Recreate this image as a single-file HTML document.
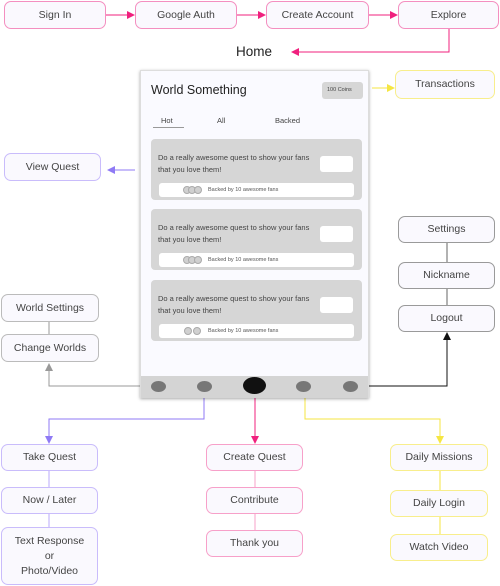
<!DOCTYPE html>
<html><head><meta charset="utf-8"><style>
*{margin:0;padding:0;box-sizing:border-box}
body{width:500px;height:586px;background:#fff;position:relative;overflow:hidden;font-family:"Liberation Sans",sans-serif;color:#444}
.b{position:absolute;background:#faf9fe;border:1px solid #999;border-radius:7px;font-size:10.5px;display:flex;align-items:center;justify-content:center;text-align:center;line-height:15px}
.pk{border-color:#f48fc0}.pu{border-color:#c9bcfb}.ye{border-color:#f8ee8c}.gr{border-color:#9a9a9a}
.a{position:absolute}
.card{position:absolute;left:151px;width:211px;height:61px;background:#d6d6d6;border-radius:4px}
.card .t{position:absolute;left:7px;top:13px;font-size:7.5px;line-height:11.5px;color:#444}
.card .w{position:absolute;left:169px;top:17px;width:33px;height:16px;background:#fff;border-radius:3px}
.card .bar{position:absolute;left:8px;top:44px;width:195px;height:14px;background:#fff;border-radius:3px;font-size:5.5px;color:#555;line-height:14px;padding-left:49px}
.card .tg{position:absolute;top:3px;width:8px;height:8px;border-radius:50%;background:#d0d0d0;border:1px solid #aaa}
.dot{position:absolute;width:15px;height:11px;border-radius:50%;background:#777}
</style></head><body>
<svg class="a" style="left:0;top:0" width="500" height="586">
<defs>
<marker id="mp" markerWidth="8" markerHeight="8" refX="7" refY="4" orient="auto" markerUnits="userSpaceOnUse"><path d="M0,0L8,4L0,8z" fill="#f0207e"/></marker>
<marker id="my" markerWidth="8" markerHeight="8" refX="7" refY="4" orient="auto" markerUnits="userSpaceOnUse"><path d="M0,0L8,4L0,8z" fill="#f5e642"/></marker>
<marker id="mu" markerWidth="8" markerHeight="8" refX="7" refY="4" orient="auto" markerUnits="userSpaceOnUse"><path d="M0,0L8,4L0,8z" fill="#8f7af5"/></marker>
<marker id="mk" markerWidth="8" markerHeight="8" refX="7" refY="4" orient="auto" markerUnits="userSpaceOnUse"><path d="M0,0L8,4L0,8z" fill="#111"/></marker>
<marker id="mg" markerWidth="8" markerHeight="8" refX="7" refY="4" orient="auto" markerUnits="userSpaceOnUse"><path d="M0,0L8,4L0,8z" fill="#999"/></marker>
</defs>
<g fill="none" stroke-width="1">
<path d="M106,15H134" stroke="#f0207e" marker-end="url(#mp)"/>
<path d="M237,15H265" stroke="#f0207e" marker-end="url(#mp)"/>
<path d="M369,15H397" stroke="#f0207e" marker-end="url(#mp)"/>
<path d="M449,29V52H292" stroke="#f0207e" marker-end="url(#mp)"/>
<path d="M372,88H394" stroke="#f5e642" marker-end="url(#my)"/>
<path d="M135,170H108" stroke="#8f7af5" marker-end="url(#mu)"/>
<path d="M357,386H447V333" stroke="#111" marker-end="url(#mk)"/>
<path d="M447,242V262M447,288V305" stroke="#666"/>
<path d="M158,386H49V364" stroke="#999" marker-end="url(#mg)"/>
<path d="M49,321V334" stroke="#999"/>
<path d="M204,386V419H49V443" stroke="#8f7af5" marker-end="url(#mu)"/>
<path d="M49,471V487M49,514V527" stroke="#b9a9fb"/>
<path d="M255,388V443" stroke="#f0207e" marker-end="url(#mp)"/>
<path d="M255,471V487M255,514V530" stroke="#f7a0c9"/>
<path d="M305,388V419H440V443" stroke="#f5e642" marker-end="url(#my)"/>
<path d="M440,471V490M440,517V534" stroke="#f5e642"/>
</g></svg>

<div class="b pk" style="left:4px;top:1px;width:102px;height:28px">Sign In</div>
<div class="b pk" style="left:135px;top:1px;width:102px;height:28px">Google Auth</div>
<div class="b pk" style="left:266px;top:1px;width:103px;height:28px">Create Account</div>
<div class="b pk" style="left:398px;top:1px;width:101px;height:28px">Explore</div>
<div class="a" style="left:236px;top:44px;font-size:13.5px;color:#222">Home</div>

<div class="a" style="left:140px;top:70px;width:229px;height:328px;background:#fafaff;border:1px solid #ddd;box-shadow:0 1px 3px rgba(0,0,0,.35)">
 <div class="a" style="left:10px;top:12px;font-size:12.5px;color:#222">World Something</div>
 <div class="a" style="left:181px;top:11px;width:41px;height:17px;background:#d6d6d6;border-radius:3px;font-size:5.5px;line-height:17px;padding-left:5px;color:#444">100 Coins</div>
 <div class="a" style="left:20px;top:45px;font-size:7.5px">Hot</div>
 <div class="a" style="left:12px;top:56px;width:31px;height:1px;background:#999"></div>
 <div class="a" style="left:76px;top:45px;font-size:7.5px">All</div>
 <div class="a" style="left:134px;top:45px;font-size:7.5px">Backed</div>
 <div class="a" style="left:0;top:305px;width:227px;height:22px;background:#d4d4d4"></div>
</div>
<div class="card" style="top:139px"><div class="t">Do a really awesome quest to show your fans<br>that you love them!</div><div class="w"></div><div class="bar"><div class="tg" style="left:24px"></div><div class="tg" style="left:29px"></div><div class="tg" style="left:35px"></div>Backed by 10 awesome fans</div></div>
<div class="card" style="top:209px"><div class="t">Do a really awesome quest to show your fans<br>that you love them!</div><div class="w"></div><div class="bar"><div class="tg" style="left:24px"></div><div class="tg" style="left:29px"></div><div class="tg" style="left:35px"></div>Backed by 10 awesome fans</div></div>
<div class="card" style="top:280px"><div class="t">Do a really awesome quest to show your fans<br>that you love them!</div><div class="w"></div><div class="bar"><div class="tg" style="left:25px"></div><div class="tg" style="left:34px"></div>Backed by 10 awesome fans</div></div>
<div class="dot" style="left:151px;top:381px"></div>
<div class="dot" style="left:197px;top:381px"></div>
<div class="dot" style="left:243px;top:377px;width:23px;height:17px;background:#111"></div>
<div class="dot" style="left:296px;top:381px"></div>
<div class="dot" style="left:343px;top:381px"></div>

<div class="b ye" style="left:395px;top:70px;width:100px;height:29px">Transactions</div>
<div class="b pu" style="left:4px;top:153px;width:97px;height:28px">View Quest</div>
<div class="b gr" style="left:398px;top:216px;width:97px;height:27px">Settings</div>
<div class="b gr" style="left:398px;top:262px;width:97px;height:27px">Nickname</div>
<div class="b gr" style="left:398px;top:305px;width:97px;height:27px">Logout</div>
<div class="b" style="left:1px;top:294px;width:98px;height:28px;border-color:#bbb">World Settings</div>
<div class="b" style="left:1px;top:334px;width:98px;height:28px;border-color:#bbb">Change Worlds</div>

<div class="b pu" style="left:1px;top:444px;width:97px;height:27px">Take Quest</div>
<div class="b pu" style="left:1px;top:487px;width:97px;height:27px">Now / Later</div>
<div class="b pu" style="left:1px;top:527px;width:97px;height:58px">Text Response<br>or<br>Photo/Video</div>
<div class="b pk" style="left:206px;top:444px;width:97px;height:27px;border-color:#f7a0c9">Create Quest</div>
<div class="b pk" style="left:206px;top:487px;width:97px;height:27px;border-color:#f7a0c9">Contribute</div>
<div class="b pk" style="left:206px;top:530px;width:97px;height:27px;border-color:#f7a0c9">Thank you</div>
<div class="b ye" style="left:390px;top:444px;width:98px;height:27px">Daily Missions</div>
<div class="b ye" style="left:390px;top:490px;width:98px;height:27px">Daily Login</div>
<div class="b ye" style="left:390px;top:534px;width:98px;height:27px">Watch Video</div>
</body></html>
